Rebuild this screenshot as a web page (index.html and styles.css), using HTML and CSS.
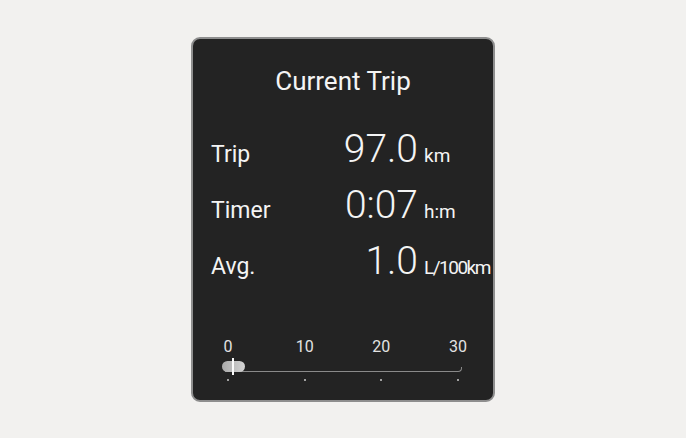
FILE: index.html
```html
<!DOCTYPE html>
<html lang="en">

<head>
    <title>Current Trip</title>
    <meta name="viewport" content="width=device-width, initial-scale=1" />
    <link rel="stylesheet" href="styles.css">
</head>

<body>
    <div class="card">
        <h1 class="title">Current Trip</h1>

        <div class="rows">
            <div class="row">
                <span class="label">Trip</span>
                <span class="value">97.0</span>
                <span class="unit">km</span>
            </div>
            <div class="row">
                <span class="label">Timer</span>
                <span class="value">0:07</span>
                <span class="unit">h:m</span>
            </div>
            <div class="row">
                <span class="label">Avg.</span>
                <span class="value">1.0</span>
                <span class="unit narrow">L/100km</span>
            </div>
        </div>

        <div class="scale">
            <div class="scale-labels">
                <span>0</span>
                <span>10</span>
                <span>20</span>
                <span>30</span>
            </div>
            <div class="track">
                <div class="track-line"></div>
                <div class="knob"></div>
                <div class="needle"></div>
            </div>
            <div class="scale-dots">
                <span></span>
                <span></span>
                <span></span>
                <span></span>
            </div>
        </div>
    </div>
</body>

</html>
```

FILE: styles.css
```css
body {
    margin: 0;
    background: #f2f1ef;
    font-family: Roboto, "Liberation Sans", sans-serif;
}

.card {
    box-sizing: border-box;
    width: 304px;
    height: 365px;
    margin: 37px auto 0;
    background: #232323;
    border: 2px solid #8e8e8e;
    border-radius: 9px;
    color: #f4f4f4;
    padding-top: 27px;
}

.title {
    margin: 0;
    font-size: 26px;
    line-height: 30px;
    font-weight: 400;
    text-align: center;
}

.rows {
    margin-top: 25px;
    padding-left: 18px;
}

.row {
    display: grid;
    grid-template-columns: 94px 107px auto;
    column-gap: 6px;
    align-items: baseline;
}

.label {
    font-size: 23px;
}

.value {
    font-size: 39px;
    line-height: 56px;
    font-weight: 300;
    text-align: right;
}

.unit {
    font-size: 19px;
}

.unit.narrow {
    letter-spacing: -1.5px;
}

.scale {
    margin: 49px 0 0 5px;
    width: 290px;
}

.scale-labels,
.scale-dots {
    display: grid;
    grid-template-columns: repeat(4, 60px);
    column-gap: 16.67px;
    justify-items: center;
}

.scale-labels {
    font-size: 16px;
    line-height: 18px;
    color: #e2e2e2;
}

.track {
    position: relative;
    box-sizing: border-box;
    height: 17px;
    margin-top: 1px;
    padding-top: 10px;
}

.track-line {
    box-sizing: border-box;
    margin-left: 27px;
    width: 237px;
    height: 5px;
    border-bottom: 1px solid #8a8a8a;
    border-right: 1px solid #8a8a8a;
    border-bottom-right-radius: 4px;
}

.knob {
    position: absolute;
    left: 24px;
    top: 4px;
    width: 23px;
    height: 11px;
    border-radius: 6px;
    background: linear-gradient(90deg, #a9a9a9, #d4d4d4);
}

.needle {
    position: absolute;
    left: 34px;
    top: 1px;
    width: 2px;
    height: 17px;
    background: #fafafa;
}

.scale-dots {
    margin-top: 5px;
}

.scale-dots span {
    width: 2px;
    height: 2px;
    background: #a0a0a0;
}
```
